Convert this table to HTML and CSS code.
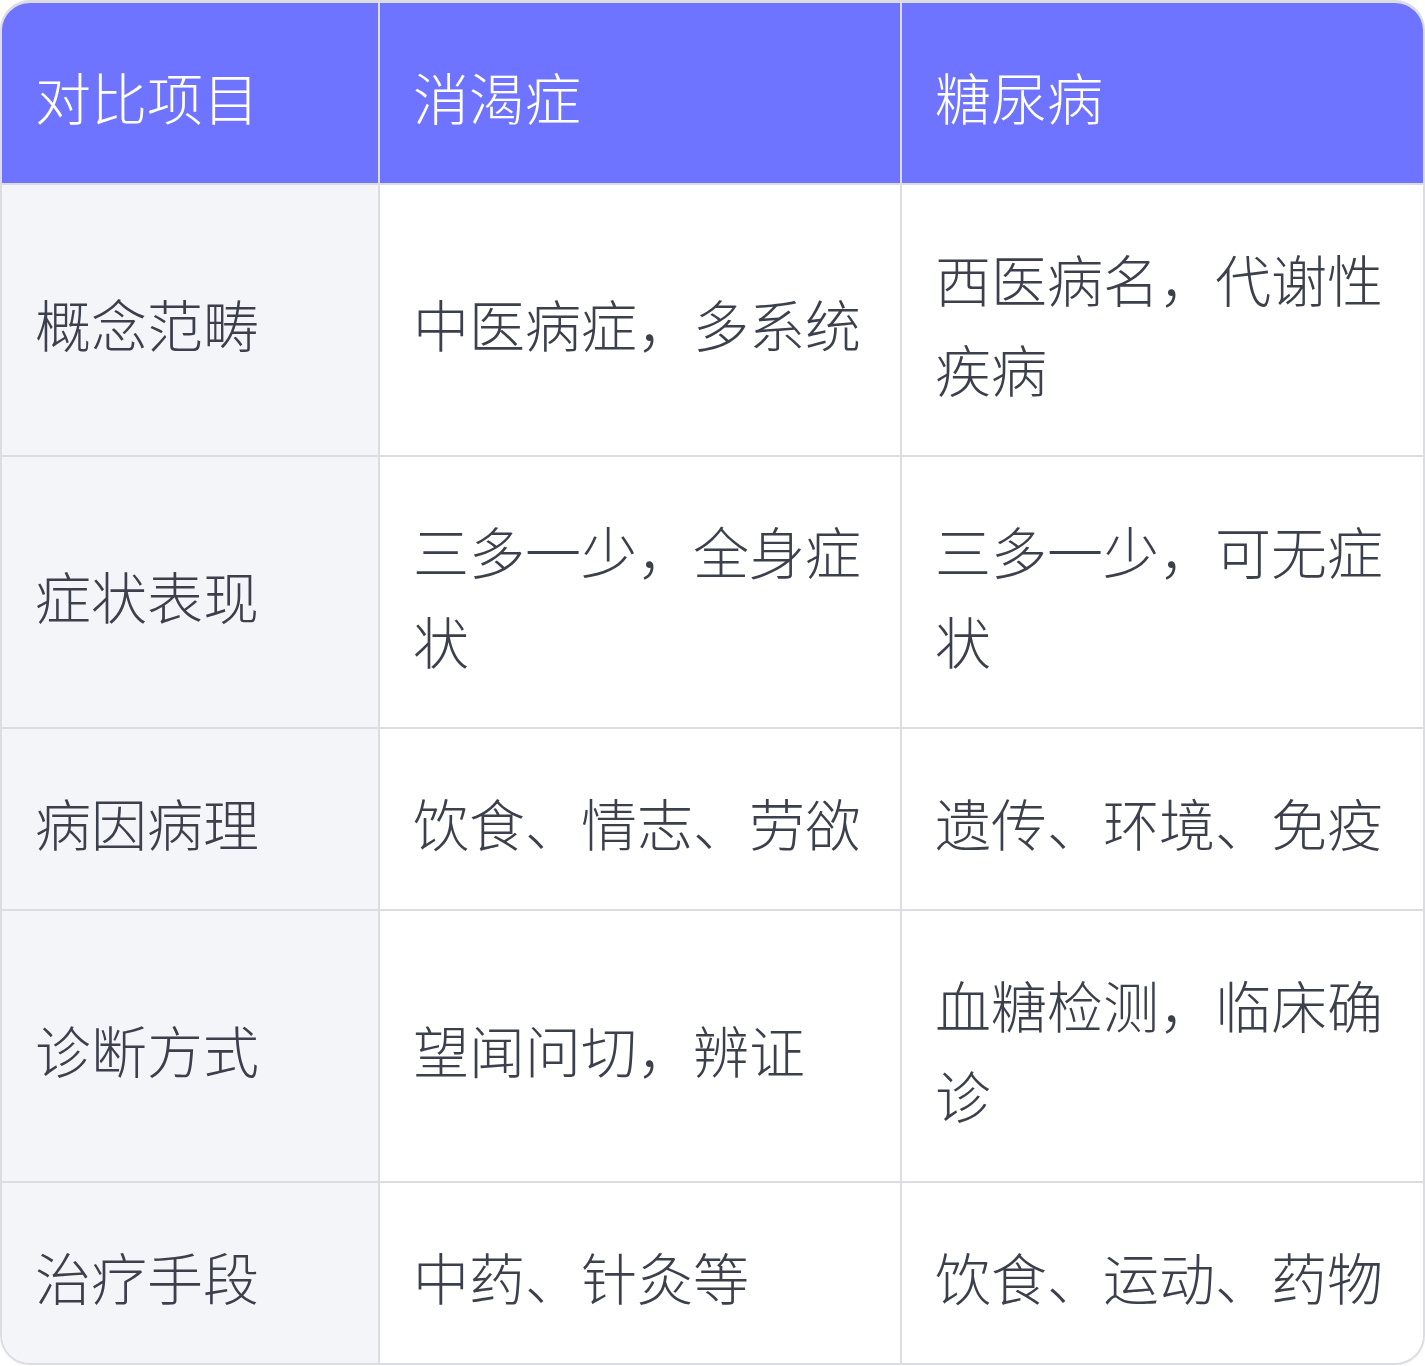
FILE: index.html
```html
<!DOCTYPE html>
<html lang="zh-CN">
<head>
<meta charset="utf-8">
<title>消渴症与糖尿病对比</title>
<link rel="stylesheet" href="styles.css">
</head>
<body>
<div class="table-wrap">
  <table class="compare">
    <colgroup>
      <col class="col-item">
      <col class="col-a">
      <col class="col-b">
    </colgroup>
    <thead>
      <tr>
        <th>对比项目</th>
        <th>消渴症</th>
        <th>糖尿病</th>
      </tr>
    </thead>
    <tbody>
      <tr>
        <td class="label">概念范畴</td>
        <td>中医病症，多系统</td>
        <td>西医病名，代谢性疾病</td>
      </tr>
      <tr>
        <td class="label">症状表现</td>
        <td>三多一少，全身症状</td>
        <td>三多一少，可无症状</td>
      </tr>
      <tr>
        <td class="label">病因病理</td>
        <td>饮食、情志、劳欲</td>
        <td>遗传、环境、免疫</td>
      </tr>
      <tr>
        <td class="label">诊断方式</td>
        <td>望闻问切，辨证</td>
        <td>血糖检测，临床确诊</td>
      </tr>
      <tr>
        <td class="label">治疗手段</td>
        <td>中药、针灸等</td>
        <td>饮食、运动、药物</td>
      </tr>
    </tbody>
  </table>
</div>
</body>
</html>
```

FILE: styles.css
```css
html, body {
  margin: 0;
  padding: 0;
  background: #ffffff;
}

.table-wrap {
  width: 1425px;
  box-sizing: border-box;
  border: 2px solid #dcdde3;
  border-top-width: 3px;
  border-radius: 30px;
  overflow: hidden;
  box-shadow: 0 1px 2px rgba(0, 0, 0, 0.06);
}

.compare {
  width: 100%;
  border-collapse: collapse;
  table-layout: fixed;
  font-family: "Noto Sans CJK SC", "Noto Sans", sans-serif;
  font-size: 56px;
  font-weight: 300;
  line-height: 90px;
  color: #3c404c;
}

.col-item { width: 377px; }
.col-a { width: 522px; }
.col-b { width: auto; }

.compare th,
.compare td {
  text-align: left;
  vertical-align: middle;
  padding: 48px 34px 42px 33px;
  border-right: 2px solid #dcdde3;
  border-bottom: 2px solid #dcdde3;
}

.compare th:last-child,
.compare td:last-child {
  border-right: none;
}

.compare tbody tr:last-child td {
  border-bottom: none;
}

.compare th {
  background: #6e74ff;
  color: #ffffff;
  font-weight: 300;
}

.compare td {
  background: #ffffff;
}

.compare td.label {
  background: #f4f5f9;
}
```
